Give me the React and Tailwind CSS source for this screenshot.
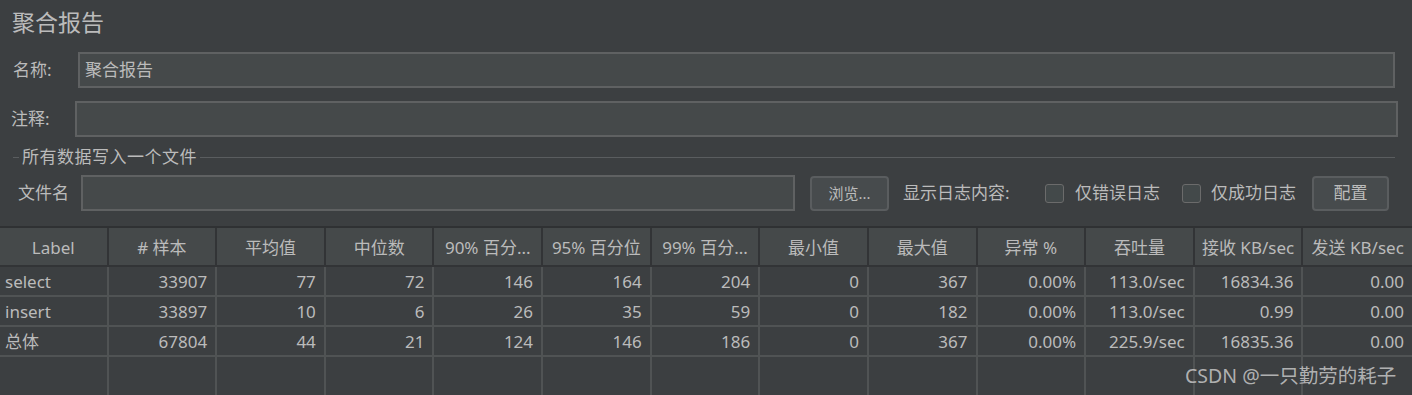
import React from 'react';

const font = { fontFamily: '"Noto Sans", "Noto Sans CJK SC", sans-serif' };

const columns = ['Label', '# 样本', '平均值', '中位数', '90% 百分...', '95% 百分位', '99% 百分...', '最小值', '最大值', '异常 %', '吞吐量', '接收 KB/sec', '发送 KB/sec'];

const rows = [
    ['select', '33907', '77', '72', '146', '164', '204', '0', '367', '0.00%', '113.0/sec', '16834.36', '0.00'],
    ['insert', '33897', '10', '6', '26', '35', '59', '0', '182', '0.00%', '113.0/sec', '0.99', '0.00'],
    ['总体', '67804', '44', '21', '124', '146', '186', '0', '367', '0.00%', '225.9/sec', '16835.36', '0.00'],
];

const TextBox = ({ value, className }) => (
    <div className={`h-[36px] bg-[#45494a] border-2 border-[#5f6162] flex items-center px-[5px] text-[17px] ${className}`}>
        {value}
    </div>
);

const Button = ({ children, className }) => (
    <div className={`h-[35px] rounded-[4px] border-2 border-[#5a5d5f] bg-[#474b4d] flex items-center justify-center text-[#bbbbbb] ${className}`}>
        {children}
    </div>
);

const Checkbox = () => (
    <div className="w-[19px] h-[19px] rounded-[3px] border border-[#6b6b6b] bg-[#43494a]" />
);

const App = () => {
    return (
        <div className="relative w-[1412px] h-[395px] bg-[#3c3f41] text-[#bbbbbb] overflow-hidden" style={font}>
            <div className="px-[12px] pt-[6px] h-[52px] text-[23px] leading-[32px]">聚合报告</div>

            <div className="flex items-center h-[36px]">
                <span className="w-[78px] pl-[13px] text-[17px]">名称:</span>
                <TextBox value="聚合报告" className="w-[1317px]" />
            </div>

            <div className="flex items-center h-[36px] mt-[13px]">
                <span className="w-[75px] pl-[11px] text-[17px]">注释:</span>
                <TextBox value="" className="w-[1323px]" />
            </div>

            <div className="flex items-center h-[20px] mt-[10px] pl-[13px] pr-[17px]">
                <div className="w-[6px] h-px bg-[#5a5d5f]" />
                <span className="px-[3px] text-[17px] leading-[20px] tracking-[0.5px]">所有数据写入一个文件</span>
                <div className="flex-1 h-px bg-[#5a5d5f]" />
            </div>

            <div className="flex items-center h-[36px] mt-[8px]">
                <span className="w-[81px] pl-[18px] text-[17px]">文件名</span>
                <TextBox value="" className="w-[714px]" />
                <Button className="w-[79px] ml-[15px] text-[15px]">浏览...</Button>
                <span className="w-[142px] ml-[14px] text-[17px] whitespace-nowrap">显示日志内容:</span>
                <Checkbox />
                <span className="w-[118px] pl-[11px] text-[17px] whitespace-nowrap">仅错误日志</span>
                <Checkbox />
                <span className="w-[111px] pl-[10px] text-[17px] whitespace-nowrap">仅成功日志</span>
                <Button className="w-[77px] text-[17px]">配置</Button>
            </div>

            <div className="mt-[15px] border-t-2 border-[#2f3133]">
                <div className="grid grid-cols-[repeat(13,minmax(0,1fr))] bg-[#45494a] h-[39px] border-b-2 border-[#323436]">
                    {columns.map((c, i) => (
                        <div key={i} className={`flex items-center justify-center pt-[2px] text-[17px] whitespace-nowrap overflow-hidden ${i < 12 ? 'border-r-2 border-[#323436]' : ''}`}>
                            {c}
                        </div>
                    ))}
                </div>
                {rows.map((r, ri) => (
                    <div key={ri} className="grid grid-cols-[repeat(13,minmax(0,1fr))] h-[30px] border-b-2 border-[#505354]">
                        {r.map((v, i) => (
                            <div key={i} className={`flex items-center pt-[2px] text-[17px] whitespace-nowrap ${i === 0 ? 'justify-start pl-[5px]' : 'justify-end pr-[8px]'} ${i < 12 ? 'border-r-2 border-[#505354]' : ''}`}>
                                {v}
                            </div>
                        ))}
                    </div>
                ))}
                <div className="grid grid-cols-[repeat(13,minmax(0,1fr))] h-[40px]">
                    {columns.map((c, i) => (
                        <div key={i} className={i < 12 ? 'border-r-2 border-[#505354]' : ''} />
                    ))}
                </div>
            </div>

            <div className="absolute left-[1185px] top-[361px] text-[19.5px] text-[#d0d0d0]/80 whitespace-nowrap">
                CSDN @一只勤劳的耗子
            </div>
        </div>
    );
};

export default App;
